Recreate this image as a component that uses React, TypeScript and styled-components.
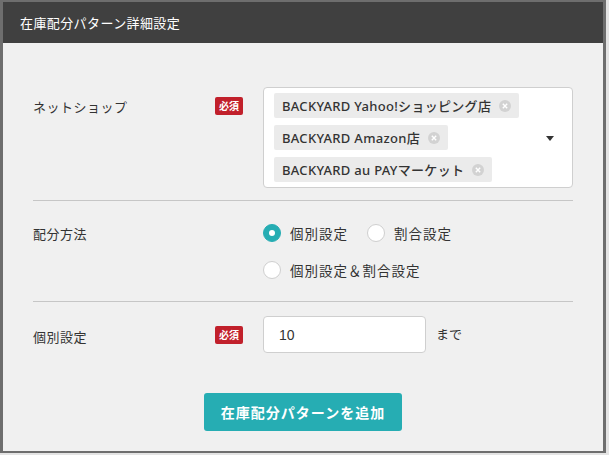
import React, { useState } from "react";
import styled, { createGlobalStyle } from "styled-components";

const GlobalStyle = createGlobalStyle`
  html, body {
    margin: 0;
    padding: 0;
    background: #e4e4e4;
  }
  body {
    font-family: "Noto Sans", "Noto Sans CJK JP", sans-serif;
    color: #333;
  }
`;

const Dialog = styled.div`
  width: 600px;
  height: 449px;
  border-style: solid;
  border-color: #6e6e6e;
  border-width: 2px 3px 2px 3px;
  background: #f0f0f0;
  display: flex;
  flex-direction: column;
`;

const Header = styled.div`
  height: 41px;
  background: #404040;
  color: #fff;
  font-size: 13px;
  letter-spacing: 0.4px;
  display: flex;
  align-items: center;
  padding-left: 17px;
`;

const Form = styled.div`
  padding: 0 30px;
  display: flex;
  flex-direction: column;
`;

const Row = styled.div<{ $top: number; $bottom: number; $divider?: boolean }>`
  display: grid;
  grid-template-columns: 182px 48px 1fr;
  align-items: start;
  padding-top: ${(p) => p.$top}px;
  padding-bottom: ${(p) => p.$bottom}px;
  border-bottom: ${(p) => (p.$divider ? "1px solid #c6c6c6" : "none")};
`;

const Label = styled.div<{ $offset: number }>`
  font-size: 13px;
  letter-spacing: 0.5px;
  margin-top: ${(p) => p.$offset}px;
  line-height: 18px;
`;

const Badge = styled.span<{ $offset: number }>`
  justify-self: start;
  margin-top: ${(p) => p.$offset}px;
  background: #c1202b;
  color: #fff;
  font-size: 10px;
  font-weight: 700;
  line-height: 18px;
  padding: 0 4px;
  border-radius: 2px;
`;

const SelectBox = styled.div`
  position: relative;
  box-sizing: border-box;
  height: 101px;
  background: #fff;
  border: 1px solid #cfcfcf;
  border-radius: 4px;
  padding: 5px 10px;
  display: flex;
  flex-direction: column;
  align-items: flex-start;
  gap: 7px;
`;

const Tag = styled.span`
  display: inline-flex;
  align-items: center;
  gap: 8px;
  height: 25px;
  background: #ebebeb;
  border-radius: 2px;
  padding: 0 8px 0 8px;
  font-size: 13px;
  font-weight: 500;
  color: #333;
  letter-spacing: 0.3px;
`;

const Remove = styled.span`
  width: 12px;
  height: 12px;
  border-radius: 50%;
  background: #d2d2d2;
  display: inline-flex;
  align-items: center;
  justify-content: center;
`;

const Caret = styled.span`
  position: absolute;
  right: 18px;
  top: 48px;
  width: 0;
  height: 0;
  border-left: 4.5px solid transparent;
  border-right: 4.5px solid transparent;
  border-top: 5px solid #333;
`;

const RadioGroup = styled.div`
  display: flex;
  flex-wrap: wrap;
  gap: 19px 0;
  width: 250px;
`;

const RadioItem = styled.label`
  display: inline-flex;
  align-items: center;
  gap: 9px;
  font-size: 13.5px;
  letter-spacing: 1px;
  margin-right: 19px;
  cursor: pointer;
  height: 18px;
`;

const RadioDot = styled.span<{ $on: boolean }>`
  width: 18px;
  height: 18px;
  box-sizing: border-box;
  border-radius: 50%;
  background: ${(p) => (p.$on ? "#26adb3" : "#fff")};
  border: 1px solid ${(p) => (p.$on ? "#26adb3" : "#cfcfcf")};
  display: inline-flex;
  align-items: center;
  justify-content: center;
  &::after {
    content: "";
    width: 6px;
    height: 6px;
    border-radius: 50%;
    background: #fff;
    display: ${(p) => (p.$on ? "block" : "none")};
  }
`;

const InputWrap = styled.div`
  display: flex;
  align-items: center;
  gap: 10px;
`;

const NumberInput = styled.input`
  width: 163px;
  height: 37px;
  box-sizing: border-box;
  border: 1px solid #cfcfcf;
  border-radius: 4px;
  background: #fff;
  padding: 0 15px;
  font-family: "Liberation Sans", Arial, sans-serif;
  font-size: 14px;
  color: #333;
  outline: none;
`;

const Suffix = styled.span`
  font-size: 13px;
  margin-top: -3px;
`;

const Footer = styled.div`
  display: flex;
  justify-content: center;
  padding-top: 40px;
`;

const Button = styled.button`
  width: 198px;
  height: 38px;
  background: #26adb3;
  color: #fff;
  border: none;
  border-radius: 3px;
  font-family: "Noto Sans", "Noto Sans CJK JP", sans-serif;
  font-size: 14px;
  font-weight: 700;
  letter-spacing: 1px;
  cursor: pointer;
`;

const shops = [
  "BACKYARD Yahoo!ショッピング店",
  "BACKYARD Amazon店",
  "BACKYARD au PAYマーケット",
];

const methods = ["個別設定", "割合設定", "個別設定＆割合設定"];

const App = () => {
  const [method, setMethod] = useState(0);
  const [amount, setAmount] = useState("10");

  return (
    <>
      <GlobalStyle />
      <Dialog>
        <Header>在庫配分パターン詳細設定</Header>
        <Form>
          <Row $top={44} $bottom={12} $divider>
            <Label $offset={11}>ネットショップ</Label>
            <Badge $offset={10}>必須</Badge>
            <SelectBox>
              {shops.map((s) => (
                <Tag key={s}>
                  {s}
                  <Remove>
                    <svg width="6" height="6" viewBox="0 0 6 6">
                      <path d="M0.8 0.8L5.2 5.2M5.2 0.8L0.8 5.2" stroke="#fff" strokeWidth="1.4" />
                    </svg>
                  </Remove>
                </Tag>
              ))}
              <Caret />
            </SelectBox>
          </Row>
          <Row $top={23} $bottom={22} $divider>
            <Label $offset={1}>配分方法</Label>
            <span />
            <RadioGroup>
              {methods.map((m, i) => (
                <RadioItem key={m} onClick={() => setMethod(i)}>
                  <RadioDot $on={method === i} />
                  {m}
                </RadioItem>
              ))}
            </RadioGroup>
          </Row>
          <Row $top={14} $bottom={0}>
            <Label $offset={12}>個別設定</Label>
            <Badge $offset={10}>必須</Badge>
            <InputWrap>
              <NumberInput value={amount} onChange={(e) => setAmount(e.target.value)} />
              <Suffix>まで</Suffix>
            </InputWrap>
          </Row>
        </Form>
        <Footer>
          <Button>在庫配分パターンを追加</Button>
        </Footer>
      </Dialog>
    </>
  );
};

export default App;
